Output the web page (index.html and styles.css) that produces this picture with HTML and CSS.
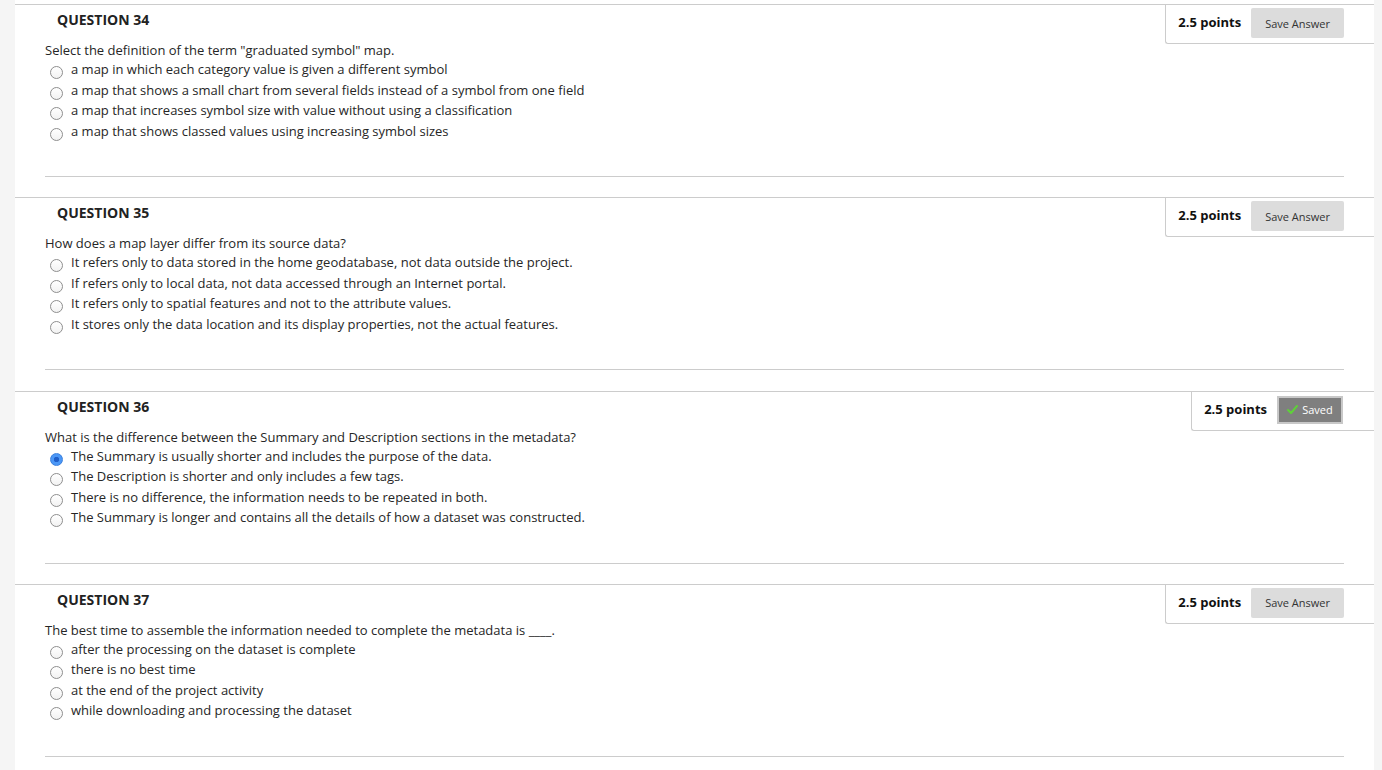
FILE: index.html
```html
<!DOCTYPE html>
<html>
<head>
<meta charset="utf-8">
<link rel="stylesheet" href="styles.css">
</head>
<body>
<div class="page">
  <div class="question">
    <div class="points-box">
      <span class="points">2.5 points</span>
      <span class="btn">Save Answer</span>
    </div>
    <h3 class="q-title">QUESTION 34</h3>
    <div class="q-body">
      <p class="q-text">Select the definition of the term "graduated symbol" map.</p>
      <div class="opt"><span class="radio"></span><span>a map in which each category value is given a different symbol</span></div>
      <div class="opt"><span class="radio"></span><span>a map that shows a small chart from several fields instead of a symbol from one field</span></div>
      <div class="opt"><span class="radio"></span><span>a map that increases symbol size with value without using a classification</span></div>
      <div class="opt"><span class="radio"></span><span>a map that shows classed values using increasing symbol sizes</span></div>
    </div>
  </div>

  <div class="question">
    <div class="points-box">
      <span class="points">2.5 points</span>
      <span class="btn">Save Answer</span>
    </div>
    <h3 class="q-title">QUESTION 35</h3>
    <div class="q-body">
      <p class="q-text">How does a map layer differ from its source data?</p>
      <div class="opt"><span class="radio"></span><span>It refers only to data stored in the home geodatabase, not data outside the project.</span></div>
      <div class="opt"><span class="radio"></span><span>If refers only to local data, not data accessed through an Internet portal.</span></div>
      <div class="opt"><span class="radio"></span><span>It refers only to spatial features and not to the attribute values.</span></div>
      <div class="opt"><span class="radio"></span><span>It stores only the data location and its display properties, not the actual features.</span></div>
    </div>
  </div>

  <div class="question">
    <div class="points-box">
      <span class="points">2.5 points</span>
      <span class="btn btn-saved"><svg class="check" width="11" height="9" viewBox="0 0 11 9"><path d="M1 5 L4 8 L10 1" fill="none" stroke="#5fd03a" stroke-width="2" stroke-linecap="round" stroke-linejoin="round"/></svg>Saved</span>
    </div>
    <h3 class="q-title">QUESTION 36</h3>
    <div class="q-body">
      <p class="q-text">What is the difference between the Summary and Description sections in the metadata?</p>
      <div class="opt"><span class="radio radio-on"></span><span>The Summary is usually shorter and includes the purpose of the data.</span></div>
      <div class="opt"><span class="radio"></span><span>The Description is shorter and only includes a few tags.</span></div>
      <div class="opt"><span class="radio"></span><span>There is no difference, the information needs to be repeated in both.</span></div>
      <div class="opt"><span class="radio"></span><span>The Summary is longer and contains all the details of how a dataset was constructed.</span></div>
    </div>
  </div>

  <div class="question">
    <div class="points-box">
      <span class="points">2.5 points</span>
      <span class="btn">Save Answer</span>
    </div>
    <h3 class="q-title">QUESTION 37</h3>
    <div class="q-body">
      <p class="q-text">The best time to assemble the information needed to complete the metadata is ____.</p>
      <div class="opt"><span class="radio"></span><span>after the processing on the dataset is complete</span></div>
      <div class="opt"><span class="radio"></span><span>there is no best time</span></div>
      <div class="opt"><span class="radio"></span><span>at the end of the project activity</span></div>
      <div class="opt"><span class="radio"></span><span>while downloading and processing the dataset</span></div>
    </div>
  </div>
</div>
</body>
</html>
```

FILE: styles.css
```css
html, body {
  margin: 0;
  padding: 0;
}
body {
  background: #f5f5f5;
  font-family: "Open Sans", "Liberation Sans", sans-serif;
  color: #262626;
  height: 770px;
  overflow: hidden;
}
.page {
  background: #fff;
  margin: 0 8px 0 15px;
  padding-top: 4px;
  min-height: 770px;
}
.question {
  border-top: 1px solid #cccccc;
  margin-bottom: 20.3px;
}
.points-box {
  float: right;
  display: flex;
  align-items: center;
  gap: 10px;
  padding: 3px 30px 5px 12px;
  height: 30px;
  border-left: 1px solid #cccccc;
  border-bottom: 1px solid #cccccc;
  border-bottom-left-radius: 3px;
}
.points {
  font-weight: 700;
  font-size: 13px;
  color: #111;
  margin-top: -2px;
}
.btn {
  display: flex;
  align-items: center;
  justify-content: center;
  height: 30px;
  padding: 0 14px;
  background: #dcdcdc;
  border-radius: 2px;
  font-size: 11px;
  color: #333;
}
.btn-saved {
  box-sizing: border-box;
  height: 28px;
  width: 66px;
  padding: 0;
  margin-right: 1px;
  background: #7f7f7f;
  border: 2px solid #c8c8c8;
  border-radius: 0;
  color: #fff;
  gap: 4px;
}
.check {
  display: block;
}
.q-title {
  margin: 0;
  padding: 5px 0 0 42px;
  font-size: 14px;
  font-weight: 700;
  line-height: 20px;
  color: #222;
}
.q-body {
  margin: 0 30px;
  padding-bottom: 35px;
  border-bottom: 1px solid #cccccc;
  font-size: 13px;
}
.q-text {
  margin: 12px 0 0 0;
  line-height: 17px;
}
.opt {
  display: flex;
  align-items: flex-start;
  line-height: 20.5px;
  height: 20.5px;
}
.radio {
  flex: none;
  box-sizing: border-box;
  width: 13px;
  height: 13px;
  margin: 7px 8px 0 5px;
  border: 1px solid #8e8e8e;
  border-radius: 50%;
  background: linear-gradient(#ffffff, #f2f2f2);
}
.radio-on {
  border: 1px solid #3a7fdd;
  background: radial-gradient(circle, #1f5fc9 0 2.5px, #4b97f6 3px);
}
```
